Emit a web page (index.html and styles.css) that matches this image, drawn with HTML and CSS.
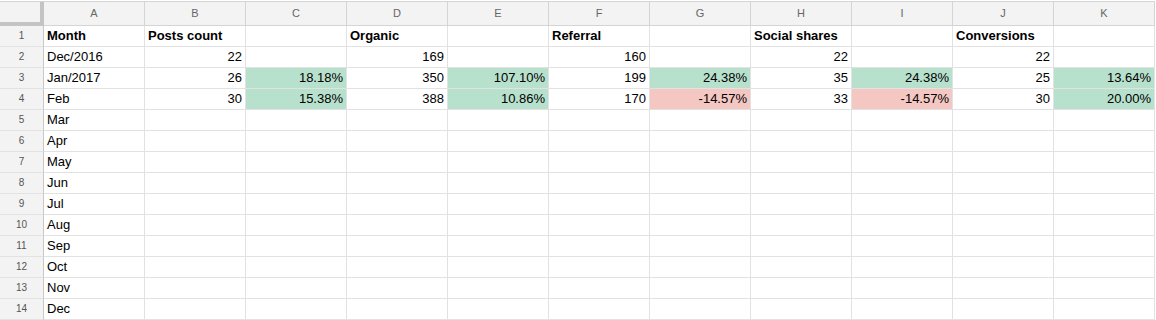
FILE: index.html
```html
<!DOCTYPE html>
<html lang="en">
<head>
  <meta charset="UTF-8">
  <title>Monthly traffic</title>
  <link rel="stylesheet" href="styles.css">
</head>
<body>
  <table class="sheet">
    <colgroup>
      <col class="col-rownum">
      <col><col><col><col><col><col><col><col><col><col><col>
    </colgroup>
    <thead>
      <tr>
        <th class="corner"></th>
        <th>A</th><th>B</th><th>C</th><th>D</th><th>E</th><th>F</th><th>G</th><th>H</th><th>I</th><th>J</th><th>K</th>
      </tr>
    </thead>
    <tbody>
      <tr class="title-row">
        <th>1</th>
        <td>Month</td><td>Posts count</td><td></td><td>Organic</td><td></td><td>Referral</td><td></td><td>Social shares</td><td></td><td>Conversions</td><td></td>
      </tr>
      <tr>
        <th>2</th>
        <td>Dec/2016</td>
        <td class="num">22</td><td></td>
        <td class="num">169</td><td></td>
        <td class="num">160</td><td></td>
        <td class="num">22</td><td></td>
        <td class="num">22</td><td></td>
      </tr>
      <tr>
        <th>3</th>
        <td>Jan/2017</td>
        <td class="num">26</td><td class="num up">18.18%</td>
        <td class="num">350</td><td class="num up">107.10%</td>
        <td class="num">199</td><td class="num up">24.38%</td>
        <td class="num">35</td><td class="num up">24.38%</td>
        <td class="num">25</td><td class="num up">13.64%</td>
      </tr>
      <tr>
        <th>4</th>
        <td>Feb</td>
        <td class="num">30</td><td class="num up">15.38%</td>
        <td class="num">388</td><td class="num up">10.86%</td>
        <td class="num">170</td><td class="num down">-14.57%</td>
        <td class="num">33</td><td class="num down">-14.57%</td>
        <td class="num">30</td><td class="num up">20.00%</td>
      </tr>
      <tr><th>5</th><td>Mar</td><td></td><td></td><td></td><td></td><td></td><td></td><td></td><td></td><td></td><td></td></tr>
      <tr><th>6</th><td>Apr</td><td></td><td></td><td></td><td></td><td></td><td></td><td></td><td></td><td></td><td></td></tr>
      <tr><th>7</th><td>May</td><td></td><td></td><td></td><td></td><td></td><td></td><td></td><td></td><td></td><td></td></tr>
      <tr><th>8</th><td>Jun</td><td></td><td></td><td></td><td></td><td></td><td></td><td></td><td></td><td></td><td></td></tr>
      <tr><th>9</th><td>Jul</td><td></td><td></td><td></td><td></td><td></td><td></td><td></td><td></td><td></td><td></td></tr>
      <tr><th>10</th><td>Aug</td><td></td><td></td><td></td><td></td><td></td><td></td><td></td><td></td><td></td><td></td></tr>
      <tr><th>11</th><td>Sep</td><td></td><td></td><td></td><td></td><td></td><td></td><td></td><td></td><td></td><td></td></tr>
      <tr><th>12</th><td>Oct</td><td></td><td></td><td></td><td></td><td></td><td></td><td></td><td></td><td></td><td></td></tr>
      <tr><th>13</th><td>Nov</td><td></td><td></td><td></td><td></td><td></td><td></td><td></td><td></td><td></td><td></td></tr>
      <tr><th>14</th><td>Dec</td><td></td><td></td><td></td><td></td><td></td><td></td><td></td><td></td><td></td><td></td></tr>
      <tr><th></th><td></td><td></td><td></td><td></td><td></td><td></td><td></td><td></td><td></td><td></td><td></td></tr>
    </tbody>
  </table>
</body>
</html>
```

FILE: styles.css
```css
body {
  margin: 0;
  background: #fff;
  font-family: "Liberation Sans", Arial, sans-serif;
  overflow: hidden;
}
.sheet {
  border-collapse: separate;
  border-spacing: 0;
  table-layout: fixed;
  width: 1155px;
  margin-top: 1px;
  border-top: 1px solid #d4d4d4;
}
.sheet col {
  width: 101px;
}
.sheet col.col-rownum {
  width: 44px;
}
.sheet th, .sheet td {
  box-sizing: border-box;
  padding: 0 3px;
  border-right: 1px solid #e2e2e2;
  border-bottom: 1px solid #e2e2e2;
  height: 21px;
  line-height: 20px;
  font-size: 13px;
  color: #000;
  white-space: nowrap;
  overflow: hidden;
}
.sheet thead th {
  height: 24px;
  line-height: 23px;
  background: #f3f3f3;
  color: #666;
  font-size: 11px;
  font-weight: normal;
  text-align: center;
  border-right-color: #d4d4d4;
  border-bottom-color: #d4d4d4;
}
.sheet thead th.corner {
  border-right: 4px solid #c4c4c4;
  border-bottom: 4px solid #c4c4c4;
}
.sheet tbody th {
  background: #f3f3f3;
  color: #555;
  font-size: 10px;
  font-weight: normal;
  text-align: center;
  border-right-color: #c8c8c8;
  border-bottom-color: #e2e2e2;
}
.title-row td {
  font-weight: bold;
}
.num {
  text-align: right;
}
.up {
  background: #b7e1cd;
}
.down {
  background: #f4c7c3;
}
```
